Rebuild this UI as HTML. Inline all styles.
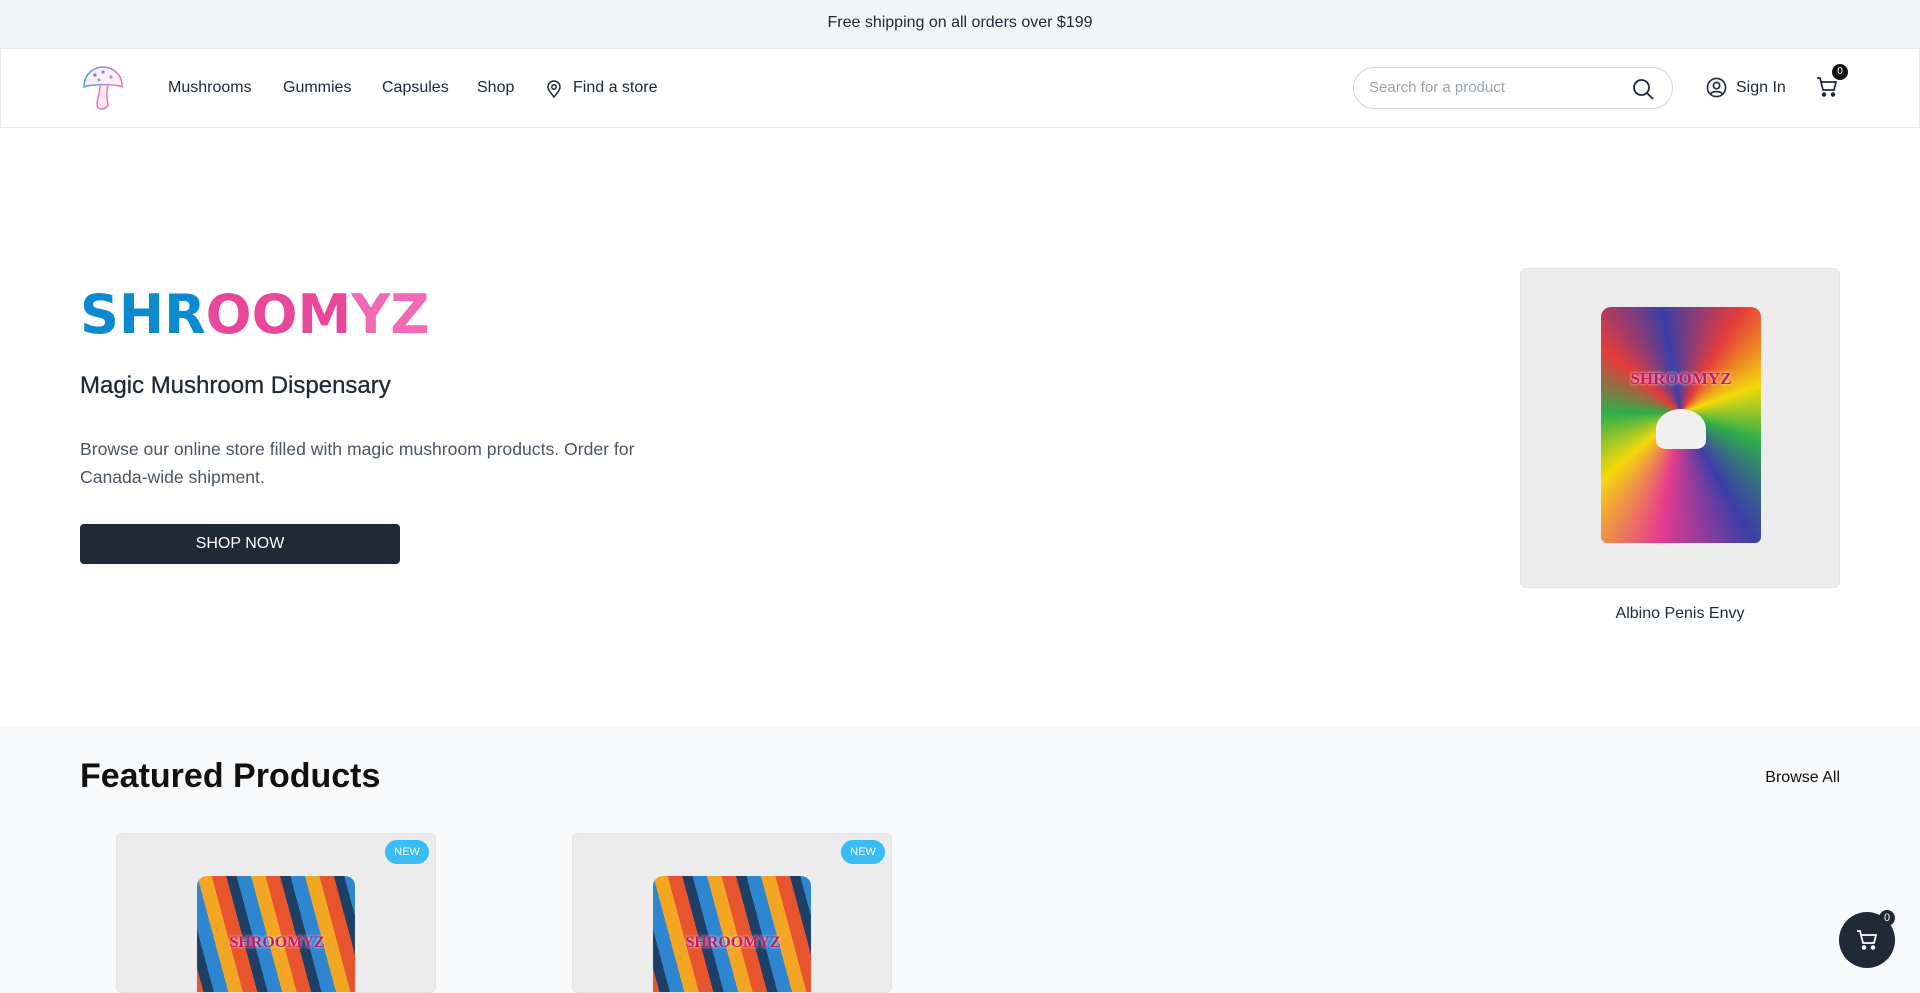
<!DOCTYPE html>
<html style="overflow:hidden;height:993px"><head><meta charset="utf-8"><style>
*{box-sizing:border-box;margin:0;padding:0}
body{width:1920px;height:993px;overflow:hidden;font-family:"Liberation Sans",sans-serif;color:#1f2937;background:#fff;position:relative}
.top{height:48px;background:#f3f4f6;text-align:center;line-height:46px;font-size:16px;color:#1f2937}
.hdr{position:absolute;top:48px;left:0;width:1920px;height:80px;border:1px solid #e5e7eb;background:#fff}
.nav a{position:absolute;top:30px;font-size:16px;color:#1f2937}
.search{position:absolute;left:1352px;top:18px;width:320px;height:42px;border:1px solid #d1d5db;border-radius:21px;padding-left:15px;line-height:40px;color:#9ca3af;font-size:15px}
.hero-logo{position:absolute;left:80px;top:286px;font-family:"DejaVu Sans",sans-serif;font-weight:bold;font-size:54px;letter-spacing:0px;line-height:58px}
h2{position:absolute;left:80px;top:372px;font-size:24px;font-weight:normal;color:#1f2937;-webkit-text-stroke:0.3px #1f2937}
p.d{position:absolute;left:80px;top:435px;width:580px;font-size:17.6px;line-height:28px;color:#4b5563}
.btn{position:absolute;left:80px;top:524px;width:320px;height:40px;background:#1f2937;border-radius:4px;color:#fff;text-align:center;line-height:40px;font-size:16px}
.pimg{position:absolute;background:#ececec;border:1px solid #e3e3e3;border-radius:6px;overflow:hidden}
.bag{position:absolute;border-radius:10px 10px 6px 6px}
.feat{position:absolute;top:727px;left:0;width:1920px;height:266px;background:#f8f9fb;overflow:hidden}
.new{position:absolute;width:44px;height:24px;border-radius:12px;background:#38bdf8;color:#fff;font-size:11px;text-align:center;line-height:24px}
</style></head><body>
<div class="top">Free shipping on all orders over $199</div>
<div class="hdr">
<svg style="position:absolute;left:80px;top:16px" width="46" height="46" viewBox="0 0 46 46"><defs><linearGradient id="g" x1="0" x2="1"><stop offset="0" stop-color="#4aa3df"/><stop offset="1" stop-color="#f472b6"/></linearGradient></defs><path d="M3 22 C3 8 14 2 22 2 C32 2 42 10 41 22 C35 19 10 19 3 22Z" fill="#f5f0fb" stroke="url(#g)" stroke-width="1.5"/><circle cx="14" cy="10" r="1.6" fill="#7a7fd0"/><circle cx="22" cy="7" r="1.6" fill="#b07ad0"/><circle cx="30" cy="12" r="1.6" fill="#e07ab8"/><circle cx="18" cy="15" r="1.4" fill="#9a7ad0"/><path d="M19 21 C19 30 14 38 17 43 C21 45 25 44 27 40 C26 33 25 27 27 21" fill="#fde7f1" stroke="#f472b6" stroke-width="1.5"/></svg>
<div class="nav"><a style="left:167px">Mushrooms</a><a style="left:282px">Gummies</a><a style="left:381px">Capsules</a><a style="left:476px">Shop</a>
<svg style="position:absolute;left:545px;top:31px" width="16" height="18" viewBox="0 0 16 18" fill="none" stroke="#1f2937" stroke-width="1.5"><path d="M8 17 C3 11 2 9 2 7 A6 6 0 0 1 14 7 C14 9 13 11 8 17Z"/><circle cx="8" cy="7" r="2.2"/></svg><a style="left:572px">Find a store</a></div>
<div class="search">Search for a product
<svg style="position:absolute;right:18px;top:10px" width="22" height="22" viewBox="0 0 22 22" fill="none" stroke="#1f2937" stroke-width="1.8"><circle cx="9.5" cy="9.5" r="7.5"/><path d="M15 15l6 6"/></svg></div>
<svg style="position:absolute;left:1705px;top:28px" width="21" height="21" viewBox="0 0 22 22" fill="none" stroke="#1f2937" stroke-width="1.7"><circle cx="11" cy="11" r="9.5"/><circle cx="11" cy="9" r="3.3"/><path d="M5 17.5c2-3 10-3 12 0"/></svg>
<div style="position:absolute;left:1735px;top:30px;font-size:16px">Sign In</div>
<svg style="position:absolute;left:1815px;top:27px" width="22" height="22" viewBox="0 0 22 22" fill="none" stroke="#1f2937" stroke-width="1.7"><path d="M1 2h3l3 12h11l2-8H5.5"/><circle cx="8" cy="18.5" r="1.4" fill="#1f2937"/><circle cx="17" cy="18.5" r="1.4" fill="#1f2937"/></svg>
<div style="position:absolute;left:1831px;top:15px;width:16px;height:16px;border-radius:8px;background:#111;color:#fff;font-size:10px;text-align:center;line-height:16px">0</div>
</div>

<div class="hero-logo"><span style="color:#0b8ad0">SHR</span><span style="color:#e8489a">OOM</span><span style="color:#f06bb4">YZ</span></div>
<h2>Magic Mushroom Dispensary</h2>
<p class="d">Browse our online store filled with magic mushroom products. Order for Canada-wide shipment.</p>
<div class="btn">SHOP NOW</div>

<div class="pimg" style="left:1520px;top:268px;width:320px;height:320px">
<div class="bag" style="left:80px;top:38px;width:160px;height:236px;background:conic-gradient(from 30deg at 50% 45%,#e63b3b,#f5d90a,#2fae4a,#3c3fa8,#e63b8f,#f5d90a,#2fae4a,#e63b3b,#3c3fa8,#e63b3b)"></div>
<div style="position:absolute;left:100px;top:100px;width:120px;font:bold 17px 'Liberation Serif',serif;color:#c2186b;text-align:center;text-shadow:0 0 3px #fff">SHROOMYZ</div>
<div style="position:absolute;left:135px;top:140px;width:50px;height:40px;background:#f0f0f0;border-radius:50% 50% 20% 20%"></div>
</div>
<div style="position:absolute;left:1520px;top:605px;width:320px;text-align:center;font-size:16px">Albino Penis Envy</div>

<div class="feat">
<div style="position:absolute;left:80px;top:30px;font-size:34px;font-weight:bold;color:#111">Featured Products</div>
<div style="position:absolute;right:80px;top:42px;font-size:16px;color:#111">Browse All</div>
<div class="pimg" style="left:116px;top:106px;width:320px;height:160px">
<div class="bag" style="left:80px;top:42px;width:158px;height:200px;background:repeating-linear-gradient(75deg,#f2a623 0 14px,#e8542e 14px 28px,#1e3f66 28px 38px,#2e86d0 38px 52px)"></div>
<div style="position:absolute;left:90px;top:100px;width:140px;text-align:center;font:bold 16px 'Liberation Serif',serif;color:#c2186b;text-shadow:0 0 3px #fff">SHROOMYZ</div>
<div class="new" style="right:6px;top:6px">NEW</div></div>
<div class="pimg" style="left:572px;top:106px;width:320px;height:160px">
<div class="bag" style="left:80px;top:42px;width:158px;height:200px;background:repeating-linear-gradient(75deg,#f2a623 0 14px,#e8542e 14px 28px,#1e3f66 28px 38px,#2e86d0 38px 52px)"></div>
<div style="position:absolute;left:90px;top:100px;width:140px;text-align:center;font:bold 16px 'Liberation Serif',serif;color:#c2186b;text-shadow:0 0 3px #fff">SHROOMYZ</div>
<div class="new" style="right:6px;top:6px">NEW</div></div>
</div>

<div style="position:absolute;left:1839px;top:912px;width:56px;height:56px;border-radius:28px;background:#1f2937"></div>
<svg style="position:absolute;left:1856px;top:929px" width="22" height="22" viewBox="0 0 22 22" fill="none" stroke="#fff" stroke-width="1.7"><path d="M1 2h3l3 12h11l2-8H5.5"/><circle cx="8" cy="18.5" r="1.4" fill="#fff"/><circle cx="17" cy="18.5" r="1.4" fill="#fff"/></svg>
<div style="position:absolute;left:1879px;top:910px;width:16px;height:16px;border-radius:8px;background:#1f2937;color:#fff;font-size:11px;text-align:center;line-height:16px">0</div>
</body></html>
